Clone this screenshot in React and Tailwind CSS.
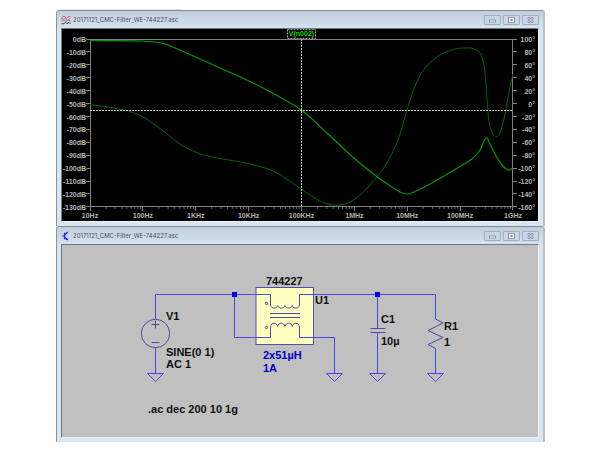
const FILE_NAME = '20171121_CMC-Filter_WE-744227.asc';

const PLOT = { left: 90, right: 513, top: 39, bottom: 207 };
const DECADES = ['10Hz', '100Hz', '1KHz', '10KHz', '100KHz', '1MHz', '10MHz', '100MHz', '1GHz'];
const ROWS = Array.from({ length: 14 }, (_, i) => i);
const DECADE_WIDTH = (PLOT.right - PLOT.left) / 8;
const ROW_HEIGHT = (PLOT.bottom - PLOT.top) / 13;

const magnitude = [
  [90, 40.5], [120, 40.6], [142, 41], [155, 42], [165, 44], [175, 48], [190, 54.5], [220, 68],
  [250, 81.5], [276, 95], [302, 110.5], [328, 134], [355, 159], [376, 176], [389, 185],
  [400, 192], [407, 194], [414, 192], [430, 184], [460, 166.5], [472, 159], [480, 150],
  [484, 141], [487, 138], [490, 144], [495, 154], [502, 165], [508, 170], [513, 168],
];

const phase = [
  [90, 105], [105, 106.5], [128, 111], [143, 117], [158, 127], [180, 144], [198, 153],
  [215, 157.5], [250, 164], [275, 172], [302, 189.5], [318, 200], [330, 204.5], [343, 204.5],
  [355, 199], [370, 185], [385, 166], [395, 147], [400, 134], [407, 110], [415, 86], [425, 68],
  [440, 55], [455, 49], [465, 48], [473, 48.5], [480, 53], [484, 65], [486, 84], [488, 112],
  [490, 127], [495, 136.5], [500, 133], [504, 119], [507, 103], [510, 87], [513, 74],
];

// Catmull-Rom spline through the samples
function smoothPath(pts) {
  let d = `M${pts[0][0]} ${pts[0][1]}`;
  for (let i = 0; i < pts.length - 1; i++) {
    const p0 = pts[i - 1] || pts[i];
    const p1 = pts[i];
    const p2 = pts[i + 1];
    const p3 = pts[i + 2] || p2;
    d += `C${p1[0] + (p2[0] - p0[0]) / 6} ${p1[1] + (p2[1] - p0[1]) / 6} ${p2[0] - (p3[0] - p1[0]) / 6} ${p2[1] - (p3[1] - p1[1]) / 6} ${p2[0]} ${p2[1]}`;
  }
  return d;
}

const WaveIcon = () => (
  <svg viewBox="0 0 10 10" className="w-[10px] h-[10px] shrink-0" fill="none" aria-hidden="true">
    <path d="M0.5 3.5 2 1.5 4 1.5 5.5 3.5 8 1.2 9.5 2" stroke="#d65858" />
    <path d="M0.5 3 2 5 4 3.5 6.5 5 9.5 3.5" stroke="#8a83d8" />
    <path d="M0.5 6.5 2.5 5 5 6.5 7.5 5 9.5 6.2" stroke="#d65858" />
    <path d="M0.5 8.8H3L4.5 7.3 6 8.8 8 7.3 9.5 8.8" stroke="#30303c" />
  </svg>
);

const SchematicIcon = () => (
  <svg viewBox="0 0 10 10" className="w-[10px] h-[10px] shrink-0" fill="none" aria-hidden="true">
    <path d="M1 5H3.5M3.5 1.8V8.2M3.5 4 6.8 1M3.5 6 6.8 9" stroke="#2020f0" strokeWidth="1.2" />
    <path d="M6.8 9.3 4.4 8.6 6.2 6.8Z" fill="#2020f0" />
  </svg>
);

const CaptionButton = ({ label, children }) => (
  <button
    type="button"
    aria-label={label}
    className="flex items-center justify-center w-[17px] h-[10px] rounded-[1px] border border-[#a1adc3] bg-[#c9d6e5]"
  >
    <svg viewBox="0 0 7 6" className="w-[7px] h-[6px]" fill="none" aria-hidden="true">
      {children}
    </svg>
  </button>
);

const ChildWindow = ({ icon, children }) => (
  <section className="pb-1 rounded-t-[3px] border-t border-l border-r-2 border-t-[#85898e] border-l-[#8b9299] border-r-[#bcbfc2] bg-[#d8e5f3]">
    <header className="flex items-center h-[17px] pt-px px-1 rounded-t-[2px] bg-linear-to-b from-[#c0cedc] to-[#d5e2ef]">
      {icon}
      <h2 className="ml-[2px] flex-1 font-['Inter',sans-serif] text-[6px] leading-[10px] text-[#46505b]">
        {FILE_NAME}
      </h2>
      <div className="flex gap-[2px]">
        <CaptionButton label="Minimize">
          <rect x="0.5" y="3" width="6" height="2" fill="#fff" stroke="#777d88" strokeWidth="0.8" />
        </CaptionButton>
        <CaptionButton label="Maximize">
          <rect x="0.5" y="0.5" width="6" height="5" fill="#fff" stroke="#777d88" strokeWidth="0.8" />
          <rect x="2.5" y="2.2" width="2" height="1.6" fill="#666c78" />
        </CaptionButton>
        <CaptionButton label="Close">
          <path d="M1 0.5 6 5.5M6 0.5 1 5.5" stroke="#777d88" strokeWidth="2.2" />
          <path d="M1.3 0.8 5.7 5.2M5.7 0.8 1.3 5.2" stroke="#fff" strokeWidth="0.9" />
        </CaptionButton>
      </div>
    </header>
    <div className="mx-1 border border-t-[#74787d] border-l-[#74787d] border-r-[#f1f5f9] border-b-[#e8eff7]">
      {children}
    </div>
  </section>
);

const BodePlot = () => (
  <svg
    viewBox="62 29 476 192"
    role="img"
    aria-label="V(n002) magnitude and phase"
    className="block w-full h-auto bg-black font-['Liberation_Sans',Arial,sans-serif] text-[7px] font-bold"
    fill="none"
  >
    <g stroke="#808080">
      <path d="M90 39.5H517M86 206.5H517M90.5 39V210M512.5 39V210" />
      {ROWS.map((i) => {
        const y = Math.floor(PLOT.top + i * ROW_HEIGHT - 0.01 * i) + 0.5;
        return <path key={i} d={`M86 ${y}h4M513 ${y}h4`} />;
      })}
      {DECADES.slice(0, -1).map((name, i) => {
        const x = PLOT.left + i * DECADE_WIDTH;
        return (
          <g key={name}>
            <path d={`M${Math.floor(x) + 0.5} 207v4`} />
            {[2, 3, 4, 5, 6, 7, 8, 9].map((n) => (
              <path key={n} d={`M${x + Math.log10(n) * DECADE_WIDTH} 207v2`} opacity="0.8" />
            ))}
          </g>
        );
      })}
    </g>
    <g fill="#b4b4b4">
      {ROWS.map((i) => (
        <g key={i}>
          <text x="86" y={PLOT.top + i * ROW_HEIGHT + 3} textAnchor="end">{`${i ? -10 * i : 0}dB`}</text>
          <text x="535" y={PLOT.top + i * ROW_HEIGHT + 3} textAnchor="end">{`${100 - 20 * i}°`}</text>
        </g>
      ))}
      {DECADES.map((name, i) => (
        <text key={name} x={PLOT.left + i * DECADE_WIDTH} y="218" textAnchor="middle">{name}</text>
      ))}
    </g>
    <path d={smoothPath(phase)} stroke="#006800" />
    <path d={smoothPath(magnitude)} stroke="#009a00" strokeWidth="1.2" />
    <path d="M90 110.5H513M301.5 39V207" stroke="#c4c4c4" strokeDasharray="2 1" />
    <rect x="287.5" y="29.5" width="28" height="9" stroke="#a0a0a0" strokeDasharray="2 1" />
    <text x="301.5" y="36" textAnchor="middle" fill="#00d800">V(n002)</text>
  </svg>
);

const Ground = ({ x }) => <path d={`M${x - 8} 373.5H${x + 8}L${x} 381.5Z`} />;

const Schematic = () => (
  <svg
    viewBox="62 245 476 192"
    role="img"
    aria-label="Common mode choke filter schematic"
    className="block w-full h-auto bg-[#c0c0c0] font-['Liberation_Sans',Arial,sans-serif] text-[11px] font-bold"
    fill="none"
  >
    <rect x="256" y="287.5" width="57.5" height="57" fill="#ffffc0" stroke="#5050a0" />
    <g stroke="#4848e4">
      <path d="M155.5 319V294.5H270.5M234.5 294.5V337.5H270.5" />
      <path d="M299.5 294.5H435.5V319M299.5 337.5H334.5V373" />
      <path d="M377.5 294.5V328M377.5 333V373M155.5 348V373M435.5 348V373" />
      <Ground x={155.5} />
      <Ground x={334.5} />
      <Ground x={377.5} />
      <Ground x={435.5} />
    </g>
    <g stroke="#4a4a9e">
      <circle cx="155.5" cy="333.5" r="14.2" />
      <path d="M151.5 324.5h8M155.5 320.5v8M151.5 342.5h8" />
      {/* choke windings and core */}
      <path d="M270.5 294.5V305C271 309 277 309 277.7 305.5C278.5 309 284 309 285 305.5C286 309 291.5 309 292.3 305.5C293 309 299 309 299.5 305V294.5" />
      <path d="M270.5 337.5V327C271 322 277 322 277.7 326.5C278.5 322 284 322 285 326.5C286 322 291.5 322 292.3 326.5C293 322 299 322 299.5 327V337.5" />
      <path d="M270 313.5H300M270 317.5H300" />
      <circle cx="266.5" cy="303.5" r="1.2" />
      <circle cx="266.5" cy="327.5" r="1.2" />
      <path d="M370.5 328.5H385.5M370.5 332.5H385.5" />
      <path d="M435.5 319 443 323 428 330.5 443 337.5 428 344.5 435.5 348.5" />
    </g>
    <g fill="#0000f0">
      <rect x="232" y="292" width="5" height="5" />
      <rect x="375" y="292" width="5" height="5" />
    </g>
    <g fill="#101010">
      <text x="166" y="320">V1</text>
      <text x="166" y="356">SINE(0 1)</text>
      <text x="166" y="368">AC 1</text>
      <text x="266" y="285">744227</text>
      <text x="315" y="304">U1</text>
      <text x="381" y="323">C1</text>
      <text x="381" y="345">10µ</text>
      <text x="444" y="330">R1</text>
      <text x="444" y="346">1</text>
      <text x="148" y="413">.ac dec 200 10 1g</text>
    </g>
    <g fill="#0000c8">
      <text x="263" y="359">2x51µH</text>
      <text x="263" y="372">1A</text>
    </g>
  </svg>
);

export default function App() {
  return (
    <main className="bg-white pl-14 pr-[55px] pt-[9px] pb-2">
      <div className="ml-1 h-px w-1/4 bg-[#e4e4e4]" />
      <ChildWindow icon={<WaveIcon />}>
        <BodePlot />
      </ChildWindow>
      <ChildWindow icon={<SchematicIcon />}>
        <Schematic />
      </ChildWindow>
    </main>
  );
}
